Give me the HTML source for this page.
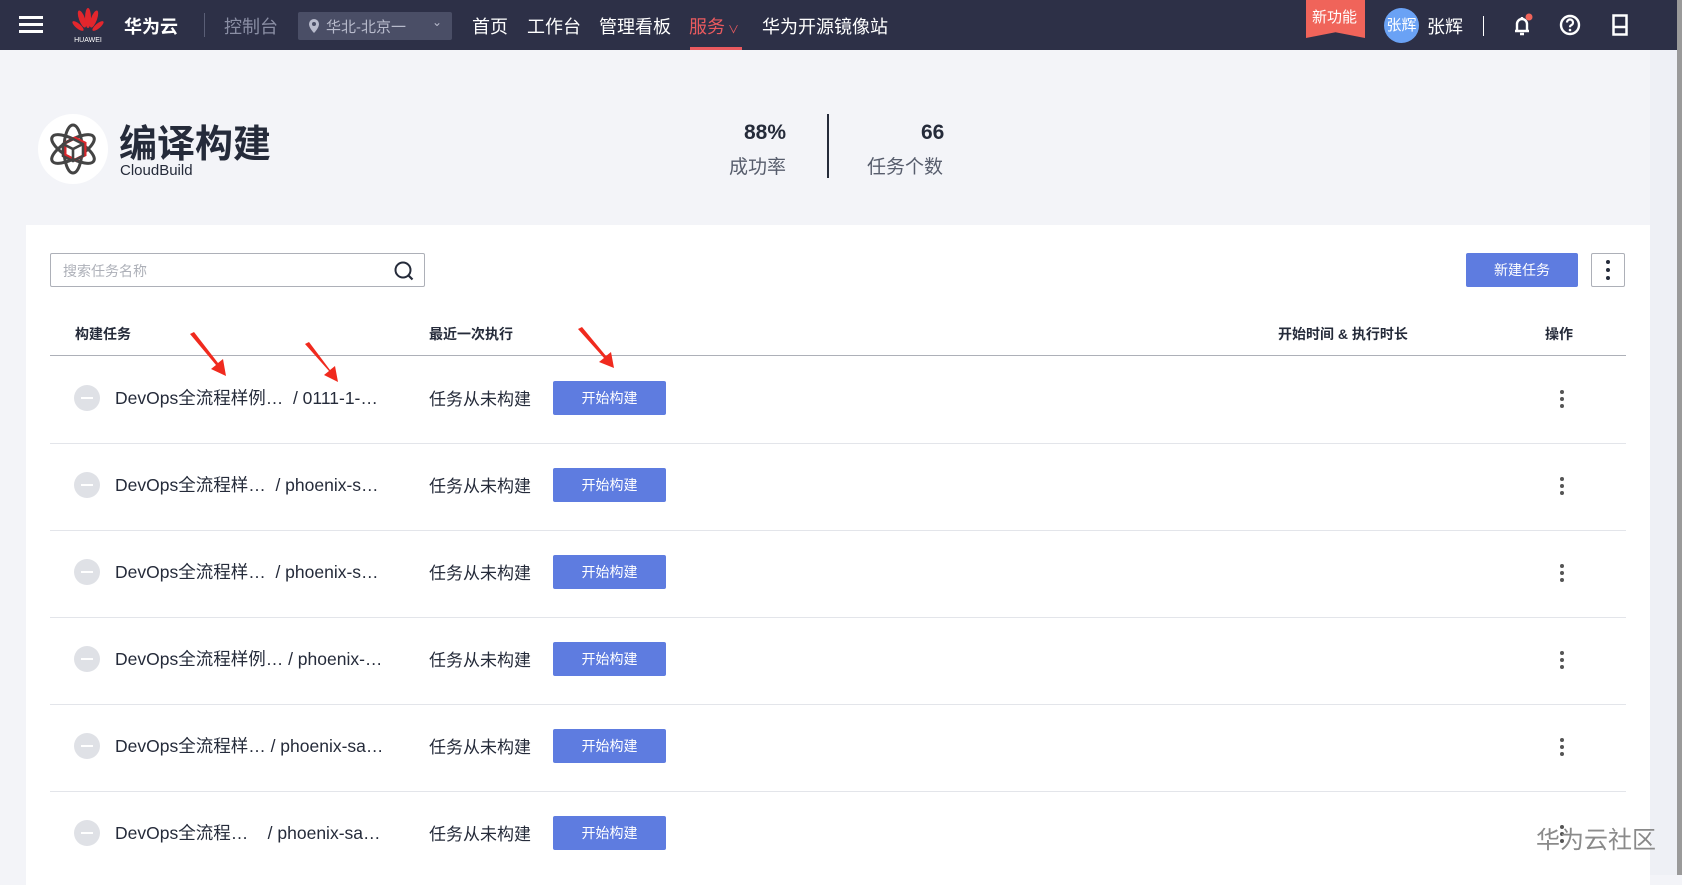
<!DOCTYPE html>
<html><head><meta charset="utf-8">
<style>
*{margin:0;padding:0;box-sizing:border-box}
body{width:1682px;height:875px;overflow:hidden;background:#f3f4f8;font-family:"Liberation Sans","Noto Sans CJK SC",sans-serif;color:#252b3a;position:relative}
.a{position:absolute;white-space:nowrap}
.hdr{position:absolute;left:0;top:0;width:1677px;height:50px;background:#2d3047}
.nav{color:#fff;font-size:18px;top:13px}
.card{position:absolute;left:26px;top:225px;width:1624px;height:660px;background:#fff}
.row{position:absolute;left:50px;width:1576px;height:87px;border-bottom:1px solid #e3e5ea}
.btn{position:absolute;left:503px;background:#5e7ce0;color:#fff;font-size:14px;width:113px;height:34px;line-height:34px;text-align:center;border-radius:2px}
.nm{position:absolute;left:65px;font-size:17.5px;color:#252b3a}
.st{position:absolute;left:379px;font-size:17px;color:#252b3a}
.circ{position:absolute;left:24px;width:26px;height:26px;border-radius:50%;background:#dfe1e6}
.circ:after{content:"";position:absolute;left:7px;top:12px;width:12px;height:2px;background:#fff}
.dots{position:absolute;left:1510px;width:4px}
.dots i{display:block;width:4px;height:4px;border-radius:50%;background:#555;margin-bottom:3px}
</style></head><body>
<div class="hdr">
  <div class="a" style="left:19px;top:16px;width:24px;height:3px;background:#fff;box-shadow:0 7px 0 #fff,0 14px 0 #fff"></div>
  <svg class="a" style="left:70px;top:6px" width="36" height="38" viewBox="0 0 36 38">
    <g fill="#e3262d"><ellipse cx="12" cy="13" rx="3" ry="9" transform="rotate(-20 12 13)"/><ellipse cx="24" cy="13" rx="3" ry="9" transform="rotate(20 24 13)"/><ellipse cx="18" cy="12" rx="3" ry="10"/><ellipse cx="8" cy="20" rx="2.5" ry="7" transform="rotate(-50 8 20)"/><ellipse cx="28" cy="20" rx="2.5" ry="7" transform="rotate(50 28 20)"/></g>
    <text x="18" y="36" fill="#fff" font-size="7" text-anchor="middle" font-family="Liberation Sans">HUAWEI</text>
  </svg>
  <div class="a nav" style="left:124px;font-weight:bold">华为云</div>
  <div class="a" style="left:204px;top:13px;width:1px;height:24px;background:#5a5e76"></div>
  <div class="a nav" style="left:224px;color:#8a8ea4">控制台</div>
  <div class="a" style="left:298px;top:12px;width:154px;height:28px;background:#4a4e66;border-radius:2px"></div>
  <svg class="a" style="left:308px;top:18px" width="12" height="16" viewBox="0 0 12 16"><path d="M6 1a5 5 0 0 0-5 5c0 4 5 9 5 9s5-5 5-9a5 5 0 0 0-5-5z" fill="#b8bbcc"/><circle cx="6" cy="6" r="2" fill="#4a4e66"/></svg>
  <div class="a" style="left:326px;top:16px;font-size:15px;color:#b8bbcc">华北-北京一</div>
  <div class="a" style="left:432px;top:15px;font-size:12px;color:#b8bbcc">⌄</div>
  <div class="a nav" style="left:472px">首页</div>
  <div class="a nav" style="left:527px">工作台</div>
  <div class="a nav" style="left:599px">管理看板</div>
  <div class="a nav" style="left:689px;color:#ea5a5f">服务<span style="font-size:11px"> ∨</span></div>
  <div class="a" style="left:690px;top:47px;width:52px;height:3px;background:#ea5a5f"></div>
  <div class="a nav" style="left:762px">华为开源镜像站</div>
  <div class="a" style="left:1306px;top:0;width:59px;height:38px;background:#f0645a;clip-path:polygon(0 0,100% 0,100% 100%,50% 85%,0 100%)"></div>
  <div class="a" style="left:1312px;top:6px;font-size:15px;color:#fff">新功能</div>
  <div class="a" style="left:1384px;top:8px;width:35px;height:35px;border-radius:50%;background:#6aa2f5;color:#fff;font-size:15px;line-height:35px;text-align:center">张辉</div>
  <div class="a nav" style="left:1427px">张辉</div>
  <div class="a" style="left:1483px;top:16px;width:1px;height:20px;background:#fff"></div>
  <svg class="a" style="left:1510px;top:13px" width="24" height="24" viewBox="0 0 24 24"><path d="M5 18h14M7 18v-7a5 5 0 0 1 10 0v7M10 21h4M12 4v2" stroke="#fff" stroke-width="2.4" fill="none"/><circle cx="19" cy="4" r="3.5" fill="#f0645a"/></svg>
  <svg class="a" style="left:1559px;top:14px" width="22" height="22" viewBox="0 0 22 22"><circle cx="11" cy="11" r="9" stroke="#fff" stroke-width="2.4" fill="none"/><path d="M8 8.5a3 3 0 1 1 4 2.8c-.8.4-1 1-1 2" stroke="#fff" stroke-width="2.2" fill="none"/><circle cx="11" cy="16" r="1.3" fill="#fff"/></svg>
  <svg class="a" style="left:1612px;top:14px" width="16" height="22" viewBox="0 0 16 22"><rect x="1.5" y="1.5" width="13" height="19" stroke="#fff" stroke-width="2.5" fill="none"/><path d="M2 13h12" stroke="#fff" stroke-width="2.5"/></svg>
</div>
<div class="a" style="left:1650px;top:50px;width:27px;height:825px;background:#eef0f5"></div>
<div class="a" style="left:1677px;top:0;width:5px;height:875px;background:#9a9a9a"></div>

<div class="a" style="left:38px;top:114px;width:70px;height:70px;border-radius:50%;background:#fff"></div>
<svg class="a" style="left:43px;top:119px" width="60" height="60" viewBox="0 0 60 60">
  <g stroke="#444" stroke-width="3" fill="none"><ellipse cx="30" cy="30" rx="9" ry="24"/><ellipse cx="30" cy="30" rx="9" ry="24" transform="rotate(60 30 30)"/><ellipse cx="30" cy="30" rx="9" ry="24" transform="rotate(-60 30 30)"/></g>
  <path d="M22 24l10-5 10 5v12l-10 5-10-5z" fill="#fff" stroke="#d9262b" stroke-width="3"/>
  <path d="M20 25l10-5 10 5v12l-10 5-10-5zM20 25l10 5 10-5M30 30v12" fill="none" stroke="#444" stroke-width="2.6"/>
</svg>
<div class="a" style="left:119px;top:113px;font-size:38px;font-weight:bold;color:#252b3a">编译构建</div>
<div class="a" style="left:120px;top:162px;font-size:15px;color:#252b3a">CloudBuild</div>

<div class="a" style="left:744px;top:121px;font-size:21px;font-weight:bold">88%</div>
<div class="a" style="left:729px;top:152px;font-size:19px;color:#575d6c">成功率</div>
<div class="a" style="left:827px;top:114px;width:2px;height:64px;background:#252b3a"></div>
<div class="a" style="left:921px;top:121px;font-size:21px;font-weight:bold">66</div>
<div class="a" style="left:867px;top:152px;font-size:19px;color:#575d6c">任务个数</div>

<div class="card">
  <div class="a" style="left:24px;top:28px;width:375px;height:34px;border:1px solid #adb0b8;border-radius:2px"></div>
  <div class="a" style="left:37px;top:36px;font-size:14px;color:#adb0b8">搜索任务名称</div>
  <svg class="a" style="left:367px;top:35px" width="22" height="22" viewBox="0 0 22 22"><circle cx="10" cy="10" r="7.5" stroke="#252b3a" stroke-width="2" fill="none"/><path d="M15.5 15.5l4 4" stroke="#252b3a" stroke-width="2.2"/></svg>
  <div class="a" style="left:1440px;top:28px;width:112px;height:34px;background:#5e7ce0;border-radius:2px;color:#fff;font-size:14px;line-height:34px;text-align:center">新建任务</div>
  <div class="a" style="left:1565px;top:28px;width:34px;height:34px;border:1px solid #adb0b8;border-radius:2px"></div>
  <div class="a" style="left:1580px;top:35px;width:4px"><i style="display:block;width:4px;height:4px;border-radius:50%;background:#252b3a;margin-bottom:4px"></i><i style="display:block;width:4px;height:4px;border-radius:50%;background:#252b3a;margin-bottom:4px"></i><i style="display:block;width:4px;height:4px;border-radius:50%;background:#252b3a"></i></div>

  <div class="a" style="left:49px;top:99px;font-size:14px;font-weight:bold">构建任务</div>
  <div class="a" style="left:403px;top:99px;font-size:14px;font-weight:bold">最近一次执行</div>
  <div class="a" style="left:1252px;top:99px;font-size:14px;font-weight:bold">开始时间 &amp; 执行时长</div>
  <div class="a" style="left:1519px;top:99px;font-size:14px;font-weight:bold">操作</div>
  <div class="a" style="left:24px;top:130px;width:1576px;height:1px;background:#adb0b8"></div>
</div>

<div class="row" style="top:357px"><div class="circ" style="top:28px"></div><div class="nm" style="top:28px">DevOps全流程样例…&nbsp; / 0111-1-…</div><div class="st" style="top:28px">任务从未构建</div><div class="btn" style="top:24px">开始构建</div><div class="dots" style="top:33px"><i></i><i></i><i></i></div></div>
<div class="row" style="top:444px"><div class="circ" style="top:28px"></div><div class="nm" style="top:28px">DevOps全流程样…&nbsp; / phoenix-s…</div><div class="st" style="top:28px">任务从未构建</div><div class="btn" style="top:24px">开始构建</div><div class="dots" style="top:33px"><i></i><i></i><i></i></div></div>
<div class="row" style="top:531px"><div class="circ" style="top:28px"></div><div class="nm" style="top:28px">DevOps全流程样…&nbsp; / phoenix-s…</div><div class="st" style="top:28px">任务从未构建</div><div class="btn" style="top:24px">开始构建</div><div class="dots" style="top:33px"><i></i><i></i><i></i></div></div>
<div class="row" style="top:618px"><div class="circ" style="top:28px"></div><div class="nm" style="top:28px">DevOps全流程样例… / phoenix-…</div><div class="st" style="top:28px">任务从未构建</div><div class="btn" style="top:24px">开始构建</div><div class="dots" style="top:33px"><i></i><i></i><i></i></div></div>
<div class="row" style="top:705px"><div class="circ" style="top:28px"></div><div class="nm" style="top:28px">DevOps全流程样… / phoenix-sa…</div><div class="st" style="top:28px">任务从未构建</div><div class="btn" style="top:24px">开始构建</div><div class="dots" style="top:33px"><i></i><i></i><i></i></div></div>
<div class="row" style="top:792px;border:none"><div class="circ" style="top:28px"></div><div class="nm" style="top:28px">DevOps全流程…&nbsp;&nbsp;&nbsp; / phoenix-sa…</div><div class="st" style="top:28px">任务从未构建</div><div class="btn" style="top:24px">开始构建</div><div class="dots" style="top:33px"><i></i><i></i><i></i></div></div>

<svg class="a" style="left:0;top:0" width="700" height="400">
  <g fill="#f02a1e">
    <path d="M190 334l4-2 24 31 5-4 3 17-15-7 5-4z"/>
    <path d="M305 344l4-2 21 28 5-4 3 16-14-7 5-4z"/>
    <path d="M578 329l4-2 24 29 5-4 3 16-15-6 5-4z"/>
  </g>
</svg>
<div class="a" style="left:1536px;top:820px;font-size:24px;color:#8a8a8a">华为云社区</div>
</body></html>
